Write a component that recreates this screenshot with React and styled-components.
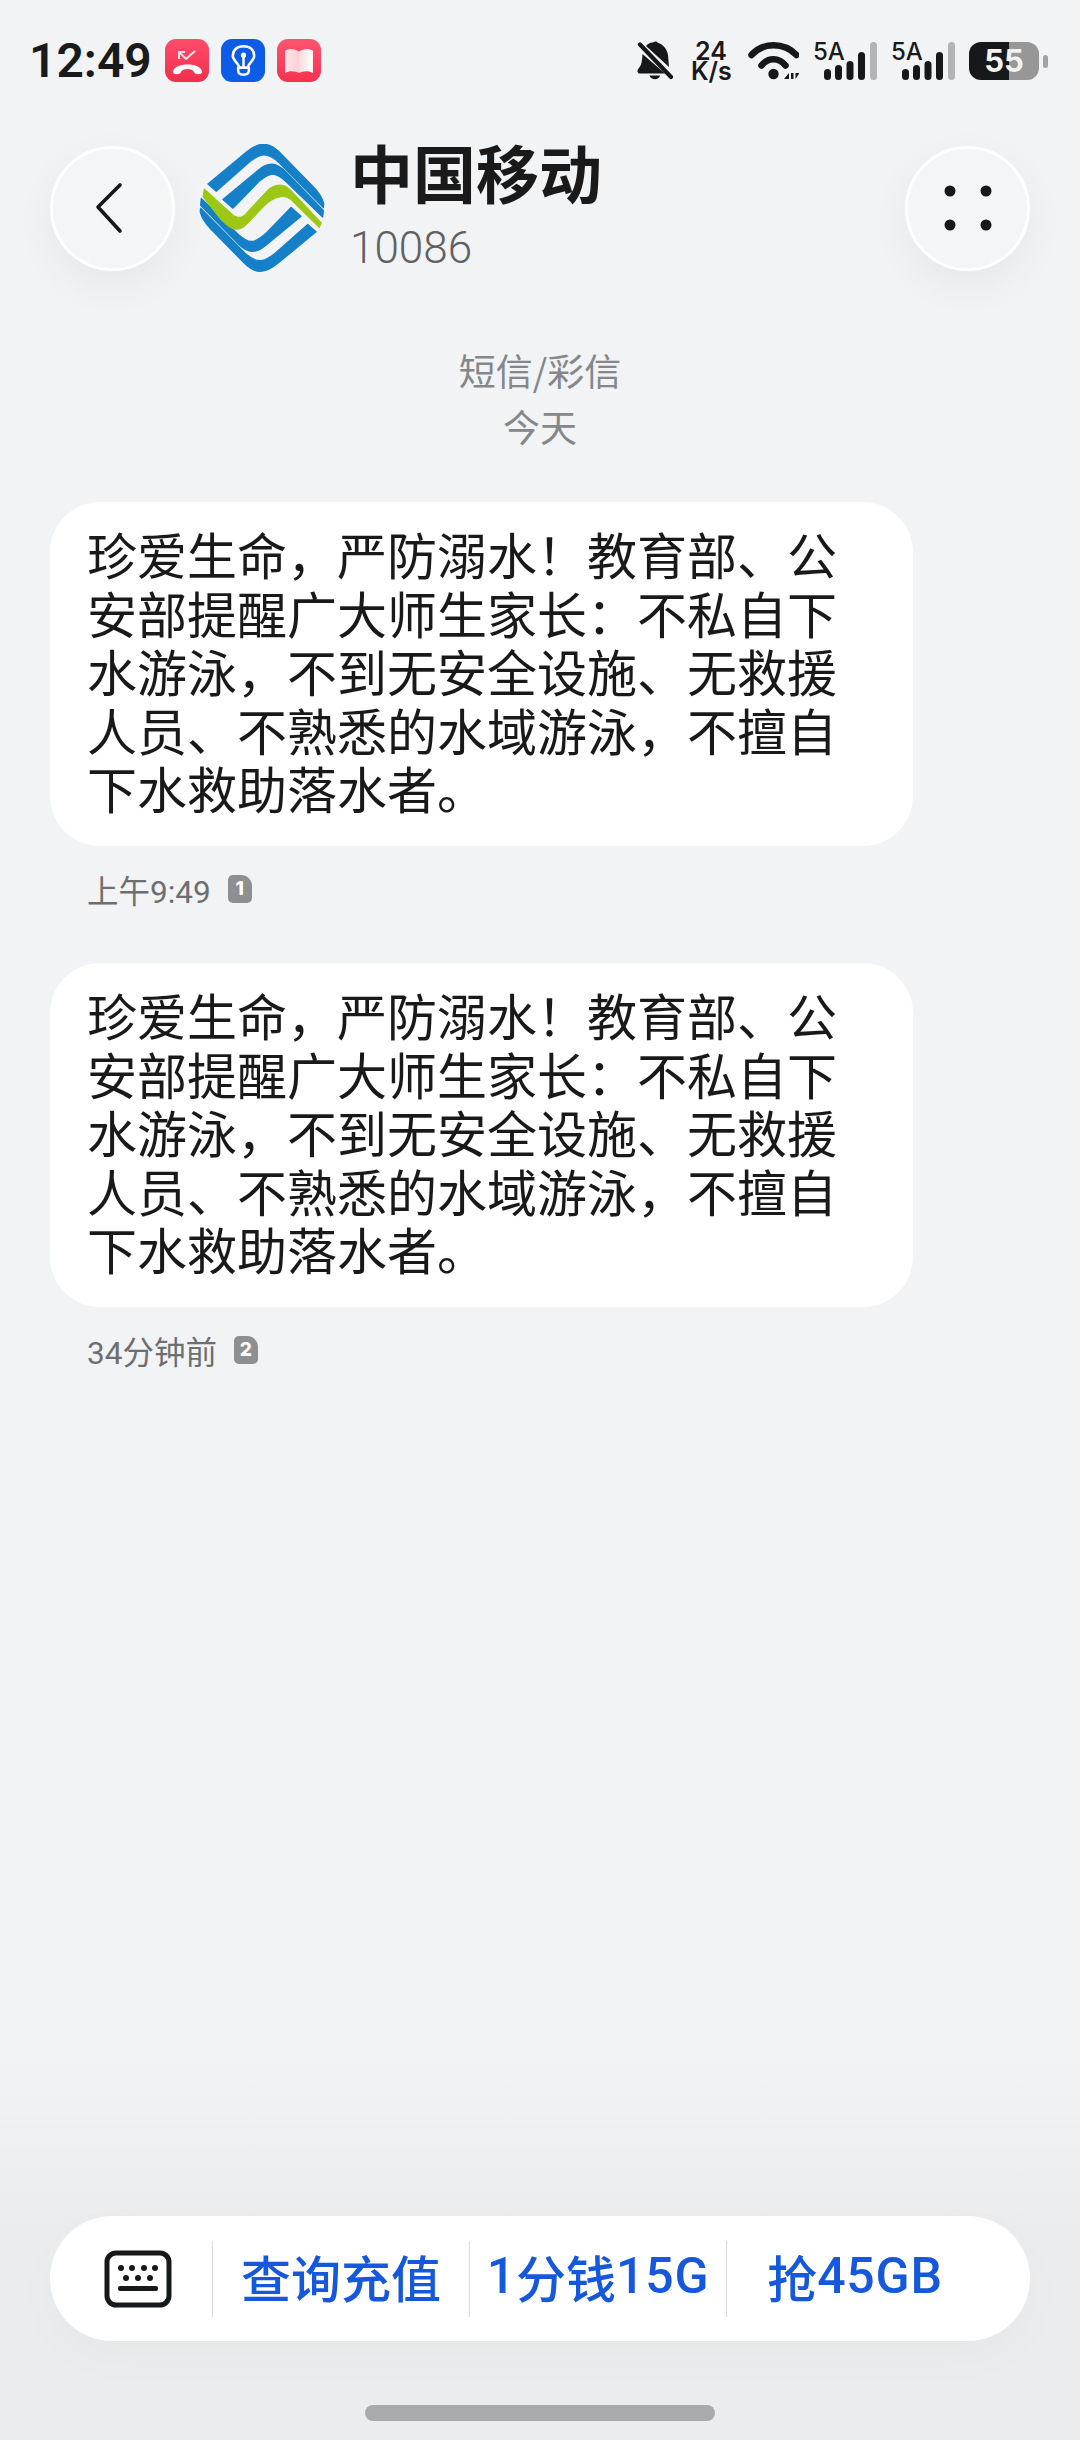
import React from "react";
import styled, { createGlobalStyle } from "styled-components";

const Global = createGlobalStyle`
  html, body { margin: 0; padding: 0; background: #f1f3f5; }
  * { box-sizing: border-box; }
`;

const CJK = `"Noto Sans CJK SC", "Noto Sans", sans-serif`;
const LATIN = `Inter, "Noto Sans CJK SC", sans-serif`;
const ROBOTO = `Roboto, "Noto Sans CJK SC", sans-serif`;

const Page = styled.div`
  width: 1080px;
  height: 2440px;
  overflow: hidden;
  display: flex;
  flex-direction: column;
  background: linear-gradient(#f1f3f5 0, #f1f3f5 2050px, #ebecee 2230px, #ebecee 2440px);
  color: #1a1a1a;
  font-family: ${CJK};
`;

const StatusBar = styled.div`
  height: 43px;
  margin-top: 39px;
  padding: 0 33px 0 29px;
  display: flex;
  align-items: center;
  justify-content: space-between;
`;
const StatusLeft = styled.div`display: flex; align-items: center;`;
const Clock = styled.div`
  font-family: ${ROBOTO};
  font-size: 48px;
  font-weight: 600;
  line-height: 43px;
  width: 136px;
  color: #191a1c;
`;
const NotifyIcon = styled.div`
  width: 44px;
  height: 43px;
  border-radius: 11px;
  margin-right: 12px;
  background: ${p => p.$bg};
  display: flex;
  align-items: center;
  justify-content: center;
`;
const StatusRight = styled.div`display: flex; align-items: center;`;
const Speed = styled.div`
  width: 40px;
  margin: 0 17px 0 18px;
  font-family: ${LATIN};
  font-size: 25px;
  font-weight: 600;
  line-height: 20px;
  text-align: center;
  color: #1a1a1a;
  white-space: nowrap;
`;
const Signal = styled.div`
  position: relative;
  width: 64px;
  height: 38px;
  margin-right: 14px;
`;
const SignalLabel = styled.span`
  position: absolute;
  left: 0;
  top: -1px;
  font-family: ${LATIN};
  font-size: 24px;
  font-weight: 500;
  line-height: 22px;
  color: #1a1a1a;
`;
const Battery = styled.div`
  position: relative;
  width: 70px;
  height: 38px;
  margin-right: 8px;
  border-radius: 12px;
  background: linear-gradient(90deg, #17181a 0, #17181a 57%, #979797 57%, #979797 100%);
  font-family: ${LATIN};
  font-size: 31px;
  font-weight: 700;
  line-height: 38px;
  text-align: center;
  color: #f2f2f2;
  &::after {
    content: "";
    position: absolute;
    right: -9px;
    top: 13px;
    width: 5px;
    height: 13px;
    border-radius: 3px;
    background: #a3a3a3;
  }
`;

const Header = styled.div`
  margin-top: 62px;
  padding: 0 50px;
  display: flex;
  align-items: center;
`;
const RoundButton = styled.div`
  width: 125px;
  height: 125px;
  border-radius: 50%;
  background: #f4f5f7;
  border: 3px solid #fff;
  box-shadow: 0 14px 40px rgba(0, 0, 0, 0.05);
  display: flex;
  align-items: center;
  justify-content: center;
  flex: none;
`;
const BackIcon = styled.svg`
  width: 28px;
  height: 52px;
  margin-right: 7px;
`;
const Logo = styled.svg`
  width: 128px;
  height: 128px;
  margin-left: 23px;
  flex: none;
`;
const Contact = styled.div`
  margin-left: 24px;
  flex: 1;
  display: flex;
  flex-direction: column;
`;
const Name = styled.div`
  font-size: 63px;
  font-weight: 700;
  line-height: 72px;
  color: #1a1a1a;
  margin-top: -11px;
`;
const Number = styled.div`
  font-family: ${ROBOTO};
  font-size: 44px;
  font-weight: 300;
  line-height: 46px;
  margin-top: 18px;
  color: #5f6062;
`;

const Thread = styled.div`
  flex: 1;
  padding: 0 50px;
  display: flex;
  flex-direction: column;
  align-items: flex-start;
`;
const Notice = styled.div`
  align-self: stretch;
  margin-top: ${p => p.$top || 0}px;
  font-size: 37px;
  line-height: 56px;
  text-align: center;
  color: #85878a;
`;
const Bubble = styled.div`
  width: 863px;
  margin-top: ${p => p.$top || 0}px;
  padding: 22px 75px 29px 37px;
  border-radius: 50px;
  background: #fff;
  font-size: 50px;
  line-height: 58.6px;
  color: #191919;
`;
const Meta = styled.div`
  height: 40px;
  margin: 23px 0 54px 37px;
  display: flex;
  align-items: center;
  font-family: ${ROBOTO};
  font-size: 31.5px;
  color: #6d6e70;
`;
const SimBadge = styled.span`
  margin-left: 17px;
  width: 24px;
  height: 28px;
  border-radius: 5px 11px 5px 5px;
  background: #8e8f91;
  color: #fff;
  font-family: ${LATIN};
  font-size: 19px;
  font-weight: 800;
  line-height: 28px;
  text-align: center;
`;

const ActionBar = styled.div`
  width: 980px;
  height: 125px;
  margin: 0 50px;
  border-radius: 62px;
  background: #fff;
  box-shadow: 0 16px 50px rgba(0, 0, 0, 0.025);
  display: flex;
  align-items: center;
  flex: none;
`;
const KeyboardCell = styled.div`
  width: 162px;
  padding-left: 54px;
  display: flex;
  align-items: center;
  flex: none;
`;
const Action = styled.div`
  width: 257px;
  height: 76px;
  padding-bottom: 6px;
  border-left: 1px solid #d9dadb;
  display: flex;
  align-items: center;
  justify-content: center;
  font-family: ${CJK};
  font-size: 50px;
  font-weight: 500;
  color: #1558dc;
  white-space: nowrap;
  flex: none;
`;
const Latin = styled.span`
  font-family: ${ROBOTO};
  font-weight: 500;
  letter-spacing: 0.8px;
`;
const HomeBar = styled.div`
  width: 350px;
  height: 16px;
  margin: 64px auto 19px;
  border-radius: 8px;
  background: #a9aaac;
  flex: none;
`;

const message = "珍爱生命\uFF0C严防溺水\uFF01教育部、公安部提醒广大师生家长\uFF1A不私自下水游泳\uFF0C不到无安全设施、无救援人员、不熟悉的水域游泳\uFF0C不擅自下水救助落水者。";

const BellOff = () => (
  <svg width="36" height="39" viewBox="0 0 36 39" fill="#17181a">
    <path d="M9 5C11 2.5 14 1 16 1.5C18 0 20 0 21 2C26 3 30 8 31 14L32 26Z" />
    <path d="M5.5 13L28 32.5H3C0.5 32.5 -0.5 29.5 1.5 27.5C5 24 5 19 5.5 13Z" />
    <path d="M12.5 34.5H23C22 39.5 14 39.5 12.5 34.5Z" />
    <path d="M3 3.5L34 36" stroke="#17181a" strokeWidth="4.2" strokeLinecap="round" />
  </svg>
);

const WifiIcon = styled.svg`
  width: 51px;
  height: 39px;
  margin-right: 14px;
`;
const Wifi = () => (
  <WifiIcon viewBox="0 0 51 39" fill="none">
    <path d="M3.5 14C15 1 36 1 48.5 14" stroke="#17181a" strokeWidth="6.5" strokeLinecap="round" />
    <path d="M13.5 24.5C20 16 31 16 37.5 24.5" stroke="#17181a" strokeWidth="6.5" strokeLinecap="round" />
    <circle cx="25.5" cy="33" r="5.2" fill="#17181a" />
    <path d="M36 38L41 32V38ZM43 32H45.5V38H43ZM47.5 32H51.5L47.5 38Z" fill="#17181a" />
  </WifiIcon>
);

const Bars = () => (
  <svg width="64" height="38" viewBox="0 0 64 38">
    {[[11, 11], [22, 15], [33.5, 19], [45, 28]].map(([x, h]) => (
      <rect key={x} x={x} y={38 - h} width="7" height={h} rx="3.5" fill="#17181a" />
    ))}
    <rect x="57" y="0" width="7" height="38" rx="3.5" fill="#b3b4b5" />
  </svg>
);

const bandA = "M85 165L200 70C222 52 238 46 252 46C270 46 284 54 300 70L400 172C418 190 428 205 433 224L432 236L300 102C285 88 270 76 250 78C238 79 225 87 212 97L110 187Z";
const bandB = "M130 212L235 125C250 112 262 106 277 106C292 106 304 114 318 128L432 245L430 265L322 160C305 144 290 134 275 136C262 138 250 148 238 158L160 238Z";

const ChinaMobileLogo = () => (
  <Logo viewBox="55 45 385 385">
    <g fill="#1580c8" stroke="#1580c8" strokeWidth="4" strokeLinejoin="round">
      <path d={bandA} />
      <path d={bandB} />
      <g transform="rotate(180 247.5 237)">
        <path d={bandA} />
        <path d={bandB} />
      </g>
    </g>
    <path d="M74 180L160 258C172 268 184 268 196 258L262 186C278 170 300 164 318 172C326 176 332 182 340 190L426 282L420 297L336 214C322 202 308 200 288 208C270 216 260 226 246 240L206 282C190 300 172 308 152 296C142 290 130 278 120 268L70 204Z" fill="#9cc715" stroke="#9cc715" strokeWidth="3" strokeLinejoin="round" />
  </Logo>
);

const Keyboard = () => (
  <svg width="68" height="58" viewBox="0 0 68 58" fill="none">
    <rect x="3" y="3" width="62" height="52" rx="9" stroke="#17181a" strokeWidth="5" />
    {[17, 28, 40, 51].map(x => <circle key={x} cx={x} cy="18" r="3" fill="#17181a" />)}
    {[22, 34, 46].map(x => <circle key={x} cx={x} cy="28" r="3" fill="#17181a" />)}
    <rect x="14" y="36" width="40" height="5" rx="2" fill="#17181a" />
  </svg>
);

const Message = ({ top, time, sim }) => (
  <>
    <Bubble $top={top}>{message}</Bubble>
    <Meta>
      {time}
      <SimBadge>{sim}</SimBadge>
    </Meta>
  </>
);

export default function App() {
  return (
    <Page>
      <Global />
      <StatusBar>
        <StatusLeft>
          <Clock>12:49</Clock>
          <NotifyIcon $bg="linear-gradient(#ff4d6b, #f22f4c)">
            <svg width="44" height="43" viewBox="0 0 44 43" fill="none">
              <path d="M14 20V13H20M14 13L21 20L30 12" stroke="#fff" strokeWidth="2" opacity="0.85" />
              <path d="M8 33C8 23 37 23 37 33C37 36 30 36 29 33C28 29 17 29 16 33C15 36 8 36 8 33Z" fill="#fff" />
            </svg>
          </NotifyIcon>
          <NotifyIcon $bg="#0d5ce8">
            <svg width="25" height="33" viewBox="0 0 28 36" fill="none" stroke="#fff" strokeWidth="2.8" strokeLinecap="round" strokeLinejoin="round">
              <path d="M9 26C9 21 2 18 2 13C2 6 7 2 14 2C21 2 26 6 26 13C26 18 19 21 19 26Z" />
              <path d="M8 26H20V29C20 33 17 34 14 34C11 34 8 33 8 29Z" />
              <path d="M14 26V14" />
              <circle cx="14" cy="12" r="1.5" fill="#fff" />
            </svg>
          </NotifyIcon>
          <NotifyIcon $bg="linear-gradient(#ff5570, #f4324f)">
            <svg width="32" height="26" viewBox="0 0 32 28">
              <defs>
                <linearGradient id="pg" x1="0" x2="1" y1="0" y2="0">
                  <stop offset="0" stopColor="#ffe4e7" />
                  <stop offset="0.48" stopColor="#ffd0d6" />
                  <stop offset="0.52" stopColor="#ffdce0" />
                  <stop offset="1" stopColor="#fff" />
                </linearGradient>
              </defs>
              <path d="M1 3C6 0 12 1 16 4C20 1 26 0 31 3V27C26 24 20 25 16 27C12 25 6 24 1 27Z" fill="url(#pg)" />
            </svg>
          </NotifyIcon>
        </StatusLeft>
        <StatusRight>
          <BellOff />
          <Speed>24<br />K/s</Speed>
          <Wifi />
          <Signal><Bars /><SignalLabel>5A</SignalLabel></Signal>
          <Signal><Bars /><SignalLabel>5A</SignalLabel></Signal>
          <Battery>55</Battery>
        </StatusRight>
      </StatusBar>

      <Header>
        <RoundButton>
          <BackIcon viewBox="0 0 28 52" fill="none">
            <path d="M25 3L3 25L25 49" stroke="#17181a" strokeWidth="3.6" strokeLinecap="round" strokeLinejoin="round" />
          </BackIcon>
        </RoundButton>
        <ChinaMobileLogo />
        <Contact>
          <Name>中国移动</Name>
          <Number>10086</Number>
        </Contact>
        <RoundButton>
          <svg width="48" height="46" viewBox="0 0 48 46" fill="#17181a">
            <circle cx="6" cy="6" r="5.5" />
            <circle cx="42" cy="6" r="5.5" />
            <circle cx="6" cy="40" r="5.5" />
            <circle cx="42" cy="40" r="5.5" />
          </svg>
        </RoundButton>
      </Header>

      <Thread>
        <Notice $top={70}>短信/彩信</Notice>
        <Notice>今天</Notice>
        <Message top={48} time="上午9:49" sim="1" />
        <Message time="34分钟前" sim="2" />
      </Thread>

      <ActionBar>
        <KeyboardCell><Keyboard /></KeyboardCell>
        <Action>查询充值</Action>
        <Action><Latin>1</Latin>分钱<Latin>15G</Latin></Action>
        <Action>抢<Latin>45GB</Latin></Action>
      </ActionBar>
      <HomeBar />
    </Page>
  );
}
